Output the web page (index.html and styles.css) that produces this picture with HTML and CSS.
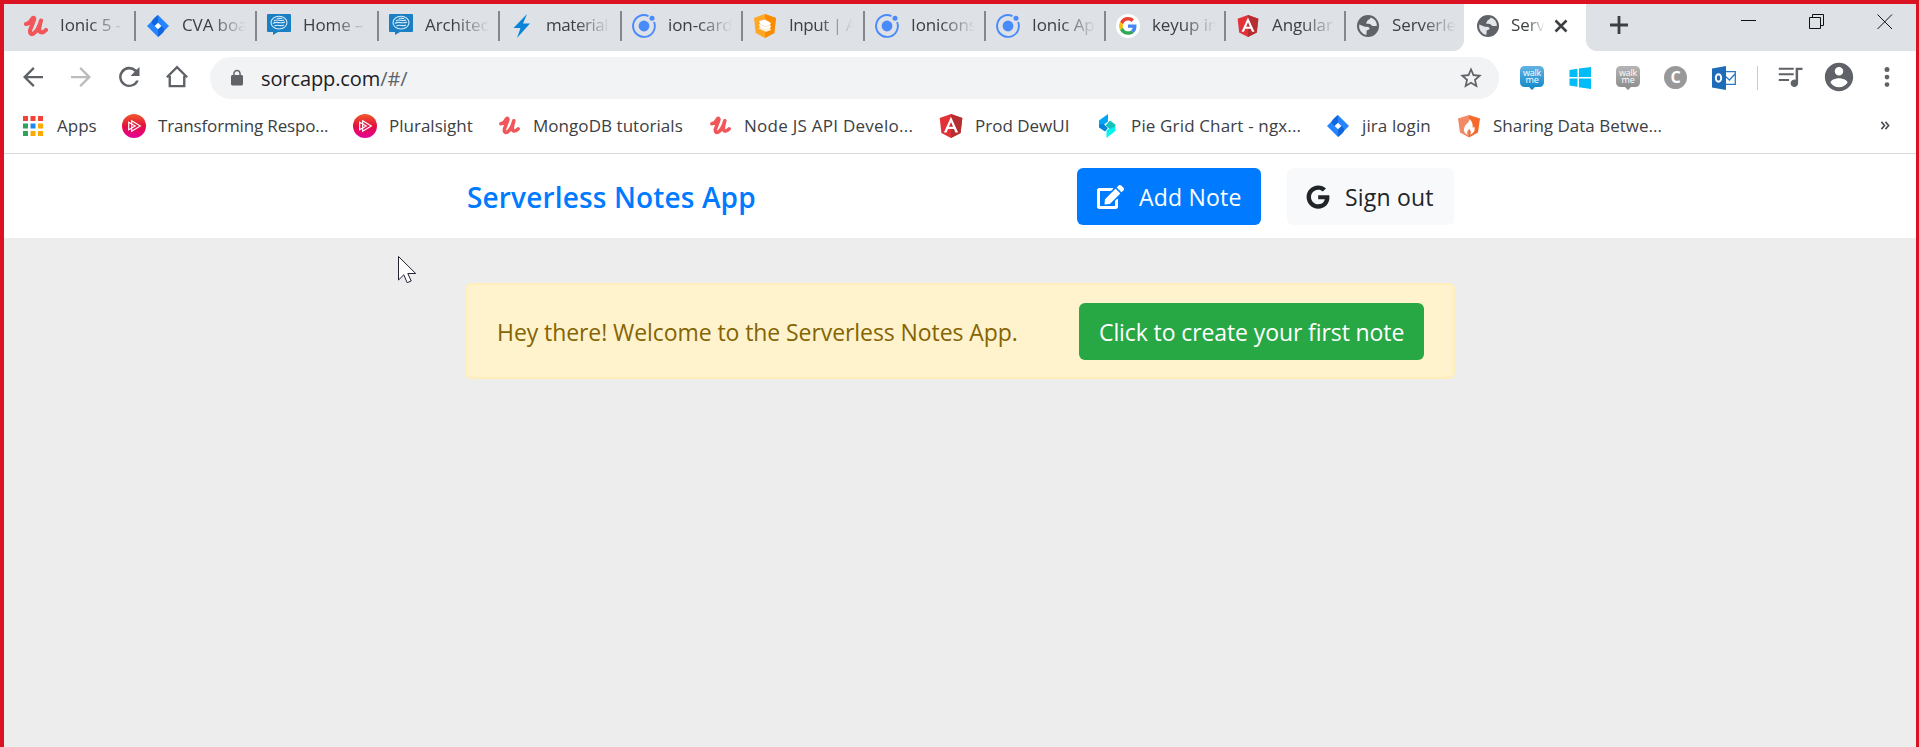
FILE: index.html
```html
<!DOCTYPE html>
<html lang="en">
<head>
<meta charset="utf-8">
<title>Serverless Notes App</title>
<link rel="stylesheet" href="styles.css">
</head>
<body>
<svg class="sprite" aria-hidden="true">
  <defs>
    <linearGradient id="ps" x1="0" y1="0" x2="0" y2="1"><stop offset="0" stop-color="#f05a28"/><stop offset=".5" stop-color="#e3103f"/><stop offset="1" stop-color="#e6009b"/></linearGradient>
    <linearGradient id="wb" x1="0" y1="0" x2="0" y2="1"><stop offset="0" stop-color="#62b3e4"/><stop offset="1" stop-color="#0c86c8"/></linearGradient>
    <linearGradient id="wg" x1="0" y1="0" x2="0" y2="1"><stop offset="0" stop-color="#b5b5b5"/><stop offset="1" stop-color="#8a8a8a"/></linearGradient>
  </defs>
  <symbol id="udemy" viewBox="0 0 24 22"><path d="M2 9C4.500 8.800 6.800 6.500 8 4 9.200 2 10.800 2.500 10 5L6.300 14.500c-1 3.500.7 5.500 3.200 4C13 16.300 15.500 11 17 5.500 15.500 11 14 16.800 17 17.300c2.200.4 3.700-.8 5-2.300" fill="none" stroke="#f0565a" stroke-width="4.100" stroke-linecap="round" stroke-linejoin="round"/></symbol>
  <symbol id="jira" viewBox="0 0 24 24"><path d="M12 1l11 11-11 11L1 12z" fill="#2684ff"/><path d="M12 1v7.800L8.500 12 6 9.500C4.500 6.500 9 3 12 1zM12 23v-7.800l3.500-3.200 2.500 2.500c1.500 3-3 6.500-6 8.500z" fill="#0b5cd6" opacity=".75"/><path d="M12 8.700l3.300 3.300-3.300 3.300L8.700 12z" fill="#fff"/></symbol>
  <symbol id="chat" viewBox="0 0 24 24"><path d="M1 0h22a1 1 0 0 1 1 1v16a1 1 0 0 1-1 1H11l-5 3V18H1a1 1 0 0 1-1-1V1a1 1 0 0 1 1-1z" fill="#1b7fc4"/><g fill="none" stroke="#d8ecf8" stroke-width="1.100"><ellipse cx="12" cy="8.600" rx="8" ry="6.400"/><path d="M7 7c3-3 6 1 10-1M6 9.500c4-3 7 1 12-1.500M7.500 12c3-2 6 .8 9.500-1M10 4.500c2-.8 4 .4 5-.2"/></g></symbol>
  <symbol id="bolt" viewBox="0 0 24 24"><path d="M17 0L3.500 14h7L7 24 20 9.500h-7z" fill="#0a84d8"/></symbol>
  <symbol id="ionic" viewBox="0 0 24 24"><path d="M16.500 2.100A10.900 10.900 0 1 0 22.100 8" fill="none" stroke="#4a8bfc" stroke-width="1.900"/><circle cx="12" cy="12" r="5.400" fill="#4a8bfc"/><circle cx="20" cy="4.300" r="2.500" fill="#4a8bfc"/></symbol>
  <symbol id="material" viewBox="0 0 24 24"><path d="M12 0l11 4-1.700 15L12 24l-9.300-5L1 4z" fill="#ffa726"/><path d="M12 0l11 4-1.700 15L12 24z" fill="#fb8c00"/><path d="M6 7l6-1.500L18 9l-1 1.800 1 1.700-1 1.800 1 1.700-5 1.800L6 14.500l1-1.700-1-1.800 1-1.800z" fill="#fff"/><path d="M7 10l5.500 2.800 4.500-1.600M7 13.500l5.500 2.500 4.500-1.500" stroke="#ffe0b2" fill="none" stroke-width=".8"/></symbol>
  <symbol id="google" viewBox="0 0 48 48"><circle cx="24" cy="24" r="24" fill="#fff"/><g transform="translate(6.200 6.200) scale(.74)"><path fill="#EA4335" d="M24 9.500c3.540 0 6.710 1.220 9.210 3.600l6.850-6.850C35.900 2.380 30.470 0 24 0 14.620 0 6.510 5.380 2.560 13.220l7.980 6.190C12.430 13.720 17.740 9.500 24 9.500z"/><path fill="#4285F4" d="M46.980 24.550c0-1.570-.15-3.090-.38-4.550H24v9.020h12.940c-.58 2.960-2.260 5.480-4.780 7.180l7.730 6c4.510-4.180 7.090-10.360 7.090-17.650z"/><path fill="#FBBC05" d="M10.530 28.590c-.48-1.450-.76-2.990-.76-4.590s.27-3.140.76-4.590l-7.980-6.190C.92 16.460 0 20.120 0 24c0 3.880.92 7.540 2.560 10.780l7.970-6.190z"/><path fill="#34A853" d="M24 48c6.480 0 11.930-2.130 15.890-5.810l-7.730-6c-2.150 1.450-4.920 2.300-8.160 2.300-6.260 0-11.570-4.220-13.470-9.910l-7.980 6.190C6.510 42.620 14.620 48 24 48z"/></g></symbol>
  <symbol id="angular" viewBox="0 0 24 24"><path d="M12 0L.7 4l1.700 15L12 24l9.600-5 1.700-15z" fill="#e23237"/><path d="M12 0v24l9.600-5 1.700-15z" fill="#b52e31"/><path d="M12 2.800L4.900 18.400h2.700L9 14.900h6l1.400 3.500h2.700zM12 8l2 4.700h-4z" fill="#fff" fill-rule="evenodd"/></symbol>
  <symbol id="globe" viewBox="0 0 24 24"><circle cx="12" cy="12" r="11" fill="#5f6368"/><path d="M3.200 10.500l4.300 1.800c2 .9 4.500-.2 5.800 1.500.9 1.600-1 2.400-2.600 2.500l-.3 4.600A9 9 0 0 1 3.200 10.500zM14.500 3.400c-.2 2-1.800 1.800-2.900 2.900-.7.900 0 1.600-1.400 2.200-.9.600.5 1.400 1.900 1.300 2-.2 2.600.6 3.600 1.600 1 .9 2.700.5 5.200.5A9 9 0 0 0 14.500 3.400z" fill="#e4e7ea"/></symbol>
  <symbol id="pluralsight" viewBox="0 0 24 24"><circle cx="12" cy="12" r="12" fill="url(#ps)"/><path d="M9.700 6.800l8.600 5.200-8.600 5.200zM6.700 8.200l6.600 3.800-6.600 3.800z" fill="none" stroke="#fff" stroke-width="1.200"/></symbol>
  <symbol id="swim" viewBox="0 0 24 24"><path d="M13 0v7.500L8.500 11 4 11V6.500z" fill="#00a5f5"/><path d="M4 10.500L8.500 10l4.500 4-3 3.500-6-4z" fill="#0583d8"/><path d="M11.500 24v-7.500L16 13l4.300-2v6z" fill="#00f5f0"/><path d="M15 6.500l5.300 4v2L15 15l-4.500-3.500z" fill="#16c3bb"/></symbol>
  <symbol id="fire" viewBox="0 0 24 24"><path d="M12 1L1 4.500 3 18.500 12 23.500z" fill="#f28b65"/><path d="M12 1l11 3.500-2 14-9 5z" fill="#f46a2a"/><path d="M12.500 5c.5 3-4.500 5-5.500 9.500-.7 3 1.500 5.500 3.500 6-1-2-.5-3.500 1.700-5.500 1 1 2.500 3 1 5.500 3-.5 5.500-4 4-8l-1.500 1.500c.5-4-1.200-7.500-3.200-9z" fill="#fff"/></symbol>
  <symbol id="apps" viewBox="0 0 20 20"><path d="M0 0h5v5H0zM7.500 0h5v5h-5zM15 0h5v5h-5z" fill="#f44336"/><path d="M0 7.500h5v5H0zM0 15h5v5H0z" fill="#2fa35a"/><path d="M7.500 7.500h5v5h-5z" fill="#1e88f0"/><path d="M15 7.500h5v5h-5zM7.500 15h5v5h-5zM15 15h5v5h-5z" fill="#fba905"/></symbol>
  <symbol id="bubble" viewBox="0 0 24 24"><path d="M4.500 0h15A4.500 4.500 0 0 1 24 4.500v12a4.500 4.500 0 0 1-4.500 4.500H15l-3 3-3-3H4.500A4.500 4.500 0 0 1 0 16.500v-12A4.500 4.500 0 0 1 4.500 0z"/></symbol>
</svg>

<div class="window">
  <div class="tabstrip">
    <div class="tab w122"><svg class="fav"><use href="#udemy"/></svg><span class="title">Ionic 5 -</span></div>
    <div class="tab"><svg class="fav"><use href="#jira"/></svg><span class="title">CVA boa</span></div>
    <div class="tab w122"><svg class="fav"><use href="#chat"/></svg><span class="title">Home –</span></div>
    <div class="tab"><svg class="fav"><use href="#chat"/></svg><span class="title">Architec</span></div>
    <div class="tab w122"><svg class="fav"><use href="#bolt"/></svg><span class="title tight">material</span></div>
    <div class="tab"><svg class="fav"><use href="#ionic"/></svg><span class="title">ion-card</span></div>
    <div class="tab w122"><svg class="fav"><use href="#material"/></svg><span class="title tight">Input | A</span></div>
    <div class="tab"><svg class="fav"><use href="#ionic"/></svg><span class="title">Ionicons</span></div>
    <div class="tab w120"><svg class="fav"><use href="#ionic"/></svg><span class="title">Ionic Ap</span></div>
    <div class="tab w120"><svg class="fav"><use href="#google"/></svg><span class="title">keyup in</span></div>
    <div class="tab w120"><svg class="fav ng"><use href="#angular"/></svg><span class="title">Angular</span></div>
    <div class="tab last"><svg class="fav"><use href="#globe"/></svg><span class="title">Serverle</span></div>
    <div class="tab active"><svg class="fav"><use href="#globe"/></svg><span class="title">Serv</span><svg class="tab-close" viewBox="0 0 14 14"><path d="M1.500 1.500l11 11M12.500 1.500l-11 11"/></svg></div>
    <div class="strip-end">
      <svg class="plus" viewBox="0 0 18 18"><path d="M9 0v18M0 9h18"/></svg>
      <div class="controls">
        <svg viewBox="0 0 16 16"><path d="M0 6.500h15"/></svg>
        <svg viewBox="0 0 16 16"><path d="M.5 3.500h11v11H.5zM3.500 3.500v-3h11v11h-3"/></svg>
        <svg viewBox="0 0 16 16"><path d="M.5.5l14.500 14.500M15 .5L.5 15"/></svg>
      </div>
    </div>
  </div>

  <div class="toolbar">
    <div class="nav">
      <svg viewBox="0 0 24 24"><path d="M20 11.100H7.600l5.700-5.700L12 4l-8 8 8 8 1.300-1.400-5.700-5.700H20z"/></svg>
      <svg class="off" viewBox="0 0 24 24"><path d="M4 11.100h12.400l-5.700-5.700L12 4l8 8-8 8-1.300-1.400 5.700-5.700H4z"/></svg>
      <svg viewBox="0 0 24 24"><path d="M18 6.200A8.100 8.100 0 1 0 19.800 14.700h-2.100A6.100 6.100 0 1 1 16.500 7.800L13.200 11.100H20.400V3.900z"/></svg>
      <svg viewBox="0 0 24 24"><path class="house" d="M3.900 12.200L12 4.200l8.100 8M6.200 11v8.300h11.600V11"/></svg>
    </div>
    <div class="omnibox">
      <svg class="lock" viewBox="0 0 24 24"><path d="M18 8h-1V6c0-2.760-2.240-5-5-5S7 3.240 7 6v2H6c-1.100 0-2 .9-2 2v10c0 1.100.9 2 2 2h12c1.100 0 2-.9 2-2V10c0-1.100-.9-2-2-2zM8.900 8V6a3.100 3.100 0 0 1 6.200 0v2z"/></svg>
      <span class="url">sorcapp.com<span class="path">/#/</span></span>
      <svg class="star" viewBox="0 0 24 24"><path d="M22 9.240l-7.190-.62L12 2 9.190 8.630 2 9.240l5.460 4.730L5.820 21 12 17.270 18.180 21l-1.630-7.030L22 9.240zM12 15.400l-3.760 2.270 1-4.280-3.320-2.880 4.380-.38L12 6.100l1.710 4.040 4.380.38-3.320 2.880 1 4.280L12 15.400z"/></svg>
    </div>
    <div class="extensions">
      <span class="walkme"><svg fill="url(#wb)"><use href="#bubble"/></svg><span><i>walk</i><i>me</i></span></span>
      <svg viewBox="0 0 24 24"><path d="M1.500 4l8-1.200v8.200h-8zM11 2.500L23 1v10H11zM1.500 12.500h8v8.200l-8-1.200zM11 12.500h12V23l-12-1.700z" fill="#00bcf7"/></svg>
      <span class="walkme"><svg fill="url(#wg)"><use href="#bubble"/></svg><span><i>walk</i><i>me</i></span></span>
      <span class="c-badge">C</span>
      <svg viewBox="0 0 24 24"><path d="M13 5.700h10.300v12.600H13M13.500 10.500l4 3.500 5.500-6" fill="none" stroke="#2a79c7" stroke-width="1.300"/><path d="M0 2.500L14 0v24L0 21.500z" fill="#1e6bb8"/><ellipse cx="6.500" cy="12" rx="2.700" ry="3.700" fill="none" stroke="#fff" stroke-width="1.900"/></svg>
    </div>
    <div class="profile">
      <svg class="music" viewBox="0 0 24 24"><path d="M3 4.500h12v1.600H3zM3 9h12v1.600H3zM3 13.600h8.200v1.600H3zM16.500 4.500H22v1.800h-3.500V17a3 3 0 1 1-2-2.800z"/></svg>
      <svg class="account" viewBox="0 0 24 24"><path d="M12 2C6.480 2 2 6.480 2 12s4.480 10 10 10 10-4.480 10-10S17.520 2 12 2zm0 3c1.660 0 3 1.340 3 3s-1.340 3-3 3-3-1.340-3-3 1.340-3 3-3zm0 14.200c-2.500 0-4.710-1.280-6-3.220.03-1.990 4-3.080 6-3.080 1.990 0 5.970 1.090 6 3.080-1.290 1.940-3.500 3.220-6 3.220z"/></svg>
      <svg class="more" viewBox="0 0 24 24"><path d="M12 8a1.900 1.900 0 1 0 0-4 1.900 1.900 0 0 0 0 4zm0 2.100a1.900 1.900 0 1 0 0 3.800 1.900 1.900 0 0 0 0-3.800zm0 6a1.900 1.900 0 1 0 0 3.800 1.900 1.900 0 0 0 0-3.800z"/></svg>
    </div>
  </div>

  <div class="bookmarks">
    <span class="bm b1"><svg class="small"><use href="#apps"/></svg>Apps</span>
    <span class="bm b2"><svg><use href="#pluralsight"/></svg>Transforming Respo...</span>
    <span class="bm b3"><svg><use href="#pluralsight"/></svg>Pluralsight</span>
    <span class="bm b4"><svg class="udemy"><use href="#udemy"/></svg>MongoDB tutorials</span>
    <span class="bm b5"><svg class="udemy"><use href="#udemy"/></svg>Node JS API Develo...</span>
    <span class="bm b6"><svg><use href="#angular"/></svg>Prod DewUI</span>
    <span class="bm b7"><svg><use href="#swim"/></svg>Pie Grid Chart - ngx...</span>
    <span class="bm b8"><svg><use href="#jira"/></svg>jira login</span>
    <span class="bm b9"><svg><use href="#fire"/></svg>Sharing Data Betwe...</span>
    <svg class="overflow" viewBox="0 0 10 10"><path d="M1 1l3.500 4L1 9M5.500 1L9 5 5.500 9"/></svg>
  </div>

  <header class="navbar">
    <div class="container">
      <a class="brand">Serverless Notes App</a>
      <div class="actions">
        <button class="btn primary"><svg viewBox="0 0 576 512"><path d="M402.600 83.200l90.200 90.200c3.800 3.800 3.800 10 0 13.800L274.400 405.600l-92.800 10.300c-12.400 1.400-22.900-9.100-21.500-21.500l10.300-92.800L388.800 83.200c3.800-3.800 10-3.800 13.800 0zm162-22.900l-48.800-48.800c-15.200-15.200-39.900-15.200-55.200 0l-35.400 35.400c-3.800 3.800-3.800 10 0 13.800l90.200 90.200c3.800 3.800 10 3.800 13.800 0l35.400-35.400c15.200-15.300 15.200-40 0-55.200zM384 346.200V448H64V128h229.800c3.200 0 6.200-1.300 8.500-3.500l40-40c7.600-7.600 2.200-20.500-8.500-20.500H48C21.500 64 0 85.500 0 112v352c0 26.500 21.500 48 48 48h352c26.500 0 48-21.500 48-48V306.200c0-10.700-12.900-16-20.500-8.500l-40 40c-2.200 2.300-3.500 5.300-3.500 8.500z"/></svg><span>Add Note</span></button>
        <button class="btn light"><svg viewBox="0 0 488 512"><path d="M488 261.800C488 403.300 391.100 504 248 504 110.800 504 0 393.200 0 256S110.800 8 248 8c66.800 0 123 24.500 166.300 64.900l-67.500 64.900C258.500 52.600 94.300 116.600 94.300 256c0 86.500 69.100 156.600 153.700 156.600 98.200 0 135-70.400 140.800-106.900H248v-85.300h236.100c2.300 12.700 3.900 24.900 3.900 41.400z"/></svg><span>Sign out</span></button>
      </div>
    </div>
  </header>

  <main class="page">
    <div class="alert">
      <span class="message">Hey there! Welcome to the Serverless Notes App.</span>
      <button class="btn success"><span>Click to create your first note</span></button>
    </div>
  </main>
</div>
<svg class="cursor" viewBox="0 0 19 28"><path d="M.5.500v23.500l5.300-5.200 3.400 7.900 4-1.700-3.400-7.500h7.900z"/></svg>
</body>
</html>
```
FILE: styles.css
```css
* { box-sizing: border-box; }
body { margin: 0; font-family: "Open Sans", "Noto Sans", sans-serif; color: #3c4043; }
svg { display: block; flex: none; }
.sprite { position: absolute; width: 0; height: 0; }
.window { height: 747px; border: solid #db1222; border-width: 4px 3px 0 4px; background: #ededed; display: flex; flex-direction: column; overflow: hidden; }

.tabstrip { height: 47px; flex: none; display: flex; padding-left: 10px; background: linear-gradient(90deg, #dee1e6 1450px, #fff 1450px); }
.tab { width: 121px; flex: none; height: 43px; display: flex; align-items: center; padding-left: 10px; gap: 12px; background: linear-gradient(#84878b, #84878b) right 0 top 7px / 2px 30px no-repeat; }
.w122 { width: 122px; }
.w120 { width: 120px; }
.fav { width: 24px; height: 24px; }
.ng { padding: 1px; }
.title { width: 66px; white-space: nowrap; font-size: 17px; letter-spacing: -.1px; line-height: 26px; margin-top: -2px; -webkit-mask-image: linear-gradient(90deg, #000 45%, transparent 97%); mask-image: linear-gradient(90deg, #000 45%, transparent 97%); }
.tight { letter-spacing: -.45px; }
.last { width: 118px; height: 47px; padding-bottom: 4px; background: #dee1e6; border-bottom-right-radius: 11px; }
.active { width: 122px; height: 47px; padding: 0 0 4px 12px; background: #fff; border-radius: 6px 6px 0 0; gap: 11px; }
.active .title { width: 35px; }
.tab-close { width: 14px; height: 14px; margin-left: -3px; stroke: #3c4043; stroke-width: 2.600; }
.strip-end { flex: 1; display: flex; justify-content: space-between; border-bottom-left-radius: 11px; background: #dee1e6; padding: 12px 23px 0 24px; }
.plus { width: 18px; height: 18px; stroke: #3c4043; stroke-width: 2.800; }
.controls { display: flex; gap: 52px; margin-top: -2px; }
.controls svg { width: 16px; height: 16px; fill: none; stroke: #111; stroke-width: 1; }

.toolbar { height: 56px; flex: none; background: #fff; display: flex; align-items: center; padding-left: 14px; fill: #5f6368; }
.nav { display: flex; gap: 18px; margin-bottom: 4px; }
.nav svg { width: 30px; height: 30px; }
.nav .off { fill: #babcbe; }
.house { fill: none; stroke: #5f6368; stroke-width: 1.900; }
.omnibox { width: 1289px; height: 42px; margin: -2px 0 0 18px; padding: 0 15px 0 18px; border-radius: 21px; background: #f1f3f4; display: flex; align-items: center; }
.lock { width: 18px; height: 18px; }
.url { margin-left: 15px; font-size: 20px; color: #202124; letter-spacing: -.1px; }
.path { color: #5f6368; }
.star { width: 26px; height: 26px; margin-left: auto; }
.extensions { display: flex; gap: 24px; margin: -2px 0 0 21px; padding-right: 21px; border-right: 1px solid #c9ccd0; }
.extensions svg { width: 24px; height: 24px; }
.walkme { display: grid; width: 24px; height: 24px; }
.walkme > * { grid-area: 1 / 1; }
.walkme span { display: flex; flex-direction: column; align-items: center; color: #fff; font-size: 9px; padding-top: 3px; letter-spacing: -.2px; }
.walkme i { font-style: normal; line-height: 7px; }
.c-badge { width: 23px; height: 23px; margin-right: 1px; border-radius: 50%; background: #999; color: #fff; font-weight: 700; font-size: 16px; line-height: 23px; text-align: center; }
.profile { display: flex; align-items: center; margin-bottom: 4px; padding-left: 17px; }
.music { width: 30px; height: 30px; }
.account { width: 34px; height: 34px; margin-left: 17px; }
.more { width: 30px; height: 30px; margin-left: 16px; }

.bookmarks { height: 47px; flex: none; display: flex; align-items: center; padding: 0 26px 9px 17px; background: #fff; border-bottom: 1px solid #d9dadc; font-size: 17px; }
.bm { display: flex; align-items: center; flex: none; gap: 12px; white-space: nowrap; }
.bm svg { width: 24px; height: 24px; }
.bm .small { width: 20px; height: 20px; margin: 0 2px; }
.bm .udemy { width: 21px; height: 19px; margin: 0 1px 0 2px; }
.b1 { width: 101px; }
.b2 { width: 231px; letter-spacing: -.15px; }
.b3 { width: 144px; }
.b4 { width: 211px; letter-spacing: .05px; }
.b5 { width: 231px; letter-spacing: .26px; }
.b6 { width: 156px; }
.b7 { width: 231px; letter-spacing: .15px; }
.b8 { width: 131px; letter-spacing: .1px; }
.overflow { width: 10px; height: 9px; margin-left: auto; fill: none; stroke: #4c5054; stroke-width: 1.800; }

.navbar { height: 84px; flex: none; background: #fff; }
.container { width: 987px; height: 85px; margin-left: 463px; display: flex; align-items: center; justify-content: space-between; }
.brand { font-size: 28px; font-weight: 600; color: #007bff; white-space: nowrap; letter-spacing: .15px; }
.actions { display: flex; gap: 26px; }
.btn { height: 57px; border: 0; border-radius: 6px; display: flex; align-items: center; font: 23px "Open Sans", sans-serif; white-space: nowrap; padding: 0 0 0 20px; }
.btn span { margin-top: 1px; }
.btn svg { height: 24px; fill: currentColor; }
.primary { width: 184px; background: #007bff; color: #fff; gap: 15px; letter-spacing: .2px; }
.primary svg { width: 27px; }
.light { width: 167px; padding-left: 19px; background: #f8f9fa; color: #212529; gap: 15px; letter-spacing: .2px; }
.light svg { width: 24px; }
.page { padding: 45px 0 0 461px; }
.alert { width: 990px; height: 96px; padding: 1px 29px 0 30px; border: 2px solid #ffeeba; border-radius: 6px; background: #fff3cd; display: flex; align-items: center; justify-content: space-between; }
.message { font-size: 23px; color: #856404; white-space: nowrap; letter-spacing: -.08px; }
.success { width: 345px; background: #28a745; color: #fff; letter-spacing: -.1px; }
.cursor { position: absolute; left: 398px; top: 256px; width: 19px; height: 28px; fill: #fff; stroke: #223; stroke-width: 1; }
```
